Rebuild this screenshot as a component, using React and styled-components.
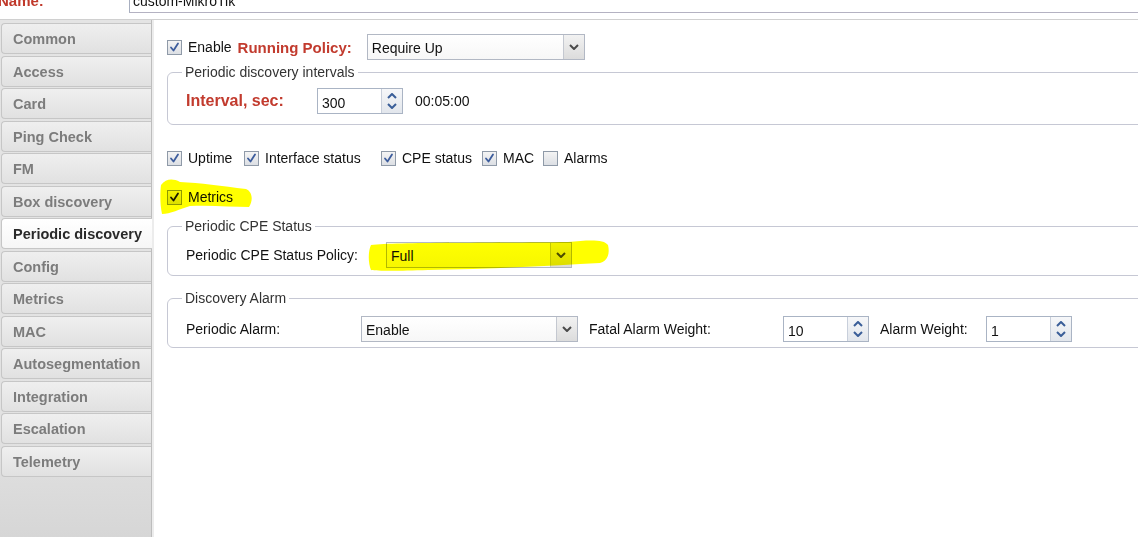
import React from 'react';
import styled, { createGlobalStyle } from 'styled-components';

const GlobalStyle = createGlobalStyle`
  html, body {
    margin: 0;
    padding: 0;
    background: #ffffff;
  }
  body {
    font-family: 'Liberation Sans', Arial, sans-serif;
    font-size: 14px;
    color: #111;
  }
`;

const tabs = [
  'Common',
  'Access',
  'Card',
  'Ping Check',
  'FM',
  'Box discovery',
  'Periodic discovery',
  'Config',
  'Metrics',
  'MAC',
  'Autosegmentation',
  'Integration',
  'Escalation',
  'Telemetry',
];

const CheckMark = ({ dark }) => (
  <svg width="11" height="11" viewBox="0 0 11 11">
    <path
      d="M2 5.5 L4.5 8.5 L9 1.5"
      fill="none"
      stroke={dark ? '#1a1a1a' : '#3c5c9c'}
      strokeWidth="1.8"
      strokeLinecap="round"
      strokeLinejoin="round"
    />
  </svg>
);

const Chevron = ({ up, color = '#3a5e98' }) => (
  <svg width="10" height="6" viewBox="0 0 10 6">
    <path
      d={up ? 'M1 5 L5 1 L9 5' : 'M1 1 L5 5 L9 1'}
      fill="none"
      stroke={color}
      strokeWidth="2"
      strokeLinejoin="round"
    />
  </svg>
);

const CheckField = ({ checked, dark, width, children }) => (
  <CheckLabel $width={width}>
    <Box>{checked && <CheckMark dark={dark} />}</Box>
    {children}
  </CheckLabel>
);

const Select = ({ value, width }) => (
  <SelectBox $width={width}>
    <SelectText>{value}</SelectText>
    <SelectArrow>
      <Chevron color="#4a4a4a" />
    </SelectArrow>
  </SelectBox>
);

const Spinner = ({ value }) => (
  <SpinBox>
    <SpinText>{value}</SpinText>
    <SpinArrows>
      <Chevron up />
      <Chevron />
    </SpinArrows>
  </SpinBox>
);

const App = () => {
  return (
    <Page>
      <GlobalStyle />
      <Header>
        <NameLabel>Name:</NameLabel>
        <NameInput>custom-MikroTik</NameInput>
      </Header>
      <Body>
        <Sidebar>
          {tabs.map((t) => (
            <Tab key={t} $active={t === 'Periodic discovery'}>
              {t}
            </Tab>
          ))}
        </Sidebar>
        <Content>
          <Row>
            <CheckField checked>Enable</CheckField>
            <RedLabel>Running Policy:</RedLabel>
            <Select value="Require Up" width={218} />
          </Row>

          <Group $mt={4}>
            <Legend>Periodic discovery intervals</Legend>
            <GroupRow>
              <RedLabel $width={131} $size={16}>Interval, sec:</RedLabel>
              <Spinner value="300" />
              <PlainText $ml={12}>00:05:00</PlainText>
            </GroupRow>
          </Group>

          <CheckRow>
            <CheckField checked width={77}>Uptime</CheckField>
            <CheckField checked width={137}>Interface status</CheckField>
            <CheckField checked width={101}>CPE status</CheckField>
            <CheckField checked width={61}>MAC</CheckField>
            <CheckField>Alarms</CheckField>
          </CheckRow>

          <MetricsRow>
            <Marker>
              <CheckField checked dark>Metrics</CheckField>
              <MarkerInk width="94" height="38" viewBox="0 0 94 38" style={{ left: -7, top: -11 }}>
                <path d="M1 8 C 6 2, 12 1, 20 5 C 40 6, 62 9, 86 12 C 93 15, 93 24, 89 30 C 72 30, 52 28, 30 29 C 20 32, 10 37, 2 37 C 0 28, 0 16, 1 8 Z" />
              </MarkerInk>
            </Marker>
          </MetricsRow>

          <Group $mt={12}>
            <Legend>Periodic CPE Status</Legend>
            <GroupRow $pb={7}>
              <PlainText $width={200}>Periodic CPE Status Policy:</PlainText>
              <Marker>
                <Select value="Full" width={186} />
                <MarkerInk width="242" height="34" viewBox="0 0 242 34" style={{ left: -18, top: -3 }}>
                  <path d="M3 6 C 30 3, 120 4, 200 3 C 220 1, 236 0, 240 6 C 242 14, 240 22, 232 24 C 180 27, 120 30, 60 31 C 30 32, 10 32, 3 31 C 0 24, 0 12, 3 6 Z" />
                </MarkerInk>
              </Marker>
            </GroupRow>
          </Group>

          <Group $mt={14}>
            <Legend>Discovery Alarm</Legend>
            <GroupRow $pt={9} $pb={5}>
              <PlainText $width={175}>Periodic Alarm:</PlainText>
              <Select value="Enable" width={217} />
              <PlainText $width={194} $ml={11}>Fatal Alarm Weight:</PlainText>
              <Spinner value="10" />
              <PlainText $width={106} $ml={11}>Alarm Weight:</PlainText>
              <Spinner value="1" />
            </GroupRow>
          </Group>
        </Content>
      </Body>
    </Page>
  );
};

export default App;

const Page = styled.div`
  width: 1138px;
  height: 537px;
  overflow: hidden;
  display: flex;
  flex-direction: column;
`;

const Header = styled.div`
  display: flex;
  align-items: flex-end;
  height: 20px;
  border-bottom: 1px solid #d0d0d0;
  box-sizing: border-box;
  overflow: hidden;
`;

const NameLabel = styled.div`
  width: 131px;
  font-weight: bold;
  font-size: 15px;
  color: #c0392b;
  margin-bottom: 10px;
  margin-left: -2px;
  line-height: 17px;
`;

const NameInput = styled.div`
  flex: 1;
  height: 30px;
  margin-bottom: 6px;
  border-left: 1px solid #a8afc0;
  border-bottom: 1px solid #b4b2c2;
  box-sizing: border-box;
  padding-left: 3px;
  display: flex;
  align-items: flex-end;
  line-height: 16px;
  padding-bottom: 3px;
  font-size: 14px;
  color: #111;
`;

const Body = styled.div`
  flex: 1;
  display: flex;
  min-height: 0;
`;

const Sidebar = styled.div`
  width: 152px;
  flex: none;
  box-sizing: border-box;
  padding-top: 3px;
  background: linear-gradient(to bottom, #e4e4e4 0%, #e2e2e2 80%, #d6d6d6 100%);
  border-right: 1px solid #bdbdbd;
  box-shadow: 2px 0 0 #ececec;
  display: flex;
  flex-direction: column;
  gap: 1.5px;
`;

const Tab = styled.div`
  height: 31px;
  margin-left: 1px;
  box-sizing: border-box;
  border: 1px solid #c6c6c6;
  border-right: none;
  border-radius: 4px 0 0 4px;
  background: ${(p) =>
    p.$active
      ? 'linear-gradient(to bottom, #ffffff, #f6f6f6)'
      : 'linear-gradient(to bottom, #efefef, #e1e1e1)'};
  color: ${(p) => (p.$active ? '#2a2a2a' : '#7c7c7c')};
  font-weight: bold;
  font-size: 14.5px;
  display: flex;
  align-items: center;
  padding-left: 11px;
  padding-top: 1px;
  margin-right: ${(p) => (p.$active ? '-1px' : '0')};
  position: relative;
  z-index: ${(p) => (p.$active ? 1 : 0)};
`;

const Content = styled.div`
  flex: 1;
  padding: 14px 0 0 13px;
  margin-left: 2px;
  background: #ffffff;
  overflow: hidden;
  display: flex;
  flex-direction: column;
  align-items: stretch;
`;

const Row = styled.div`
  display: flex;
  align-items: center;
  height: 26px;
`;

const CheckLabel = styled.label`
  display: inline-flex;
  align-items: center;
  gap: 6px;
  font-size: 14px;
  color: #111;
  line-height: 18px;
  white-space: nowrap;
  width: ${(p) => (p.$width ? `${p.$width}px` : 'auto')};
  flex: none;
`;

const Box = styled.span`
  width: 15px;
  height: 15px;
  box-sizing: border-box;
  border: 1px solid #8f9aa8;
  background: linear-gradient(to bottom, #f4f4f4, #dcdfe4);
  display: inline-flex;
  align-items: center;
  justify-content: center;
`;

const RedLabel = styled.span`
  font-weight: bold;
  font-size: ${(p) => p.$size || 15}px;
  color: #c23b2e;
  margin-left: ${(p) => (p.$width ? '0' : '6px')};
  margin-right: ${(p) => (p.$width ? '0' : '15px')};
  width: ${(p) => (p.$width ? `${p.$width}px` : 'auto')};
  white-space: nowrap;
`;

const PlainText = styled.span`
  font-size: 14px;
  color: #111;
  width: ${(p) => (p.$width ? `${p.$width}px` : 'auto')};
  margin-left: ${(p) => p.$ml || 0}px;
  flex: none;
  white-space: nowrap;
`;

const SelectBox = styled.div`
  width: ${(p) => p.$width}px;
  height: 26px;
  box-sizing: border-box;
  border: 1px solid #b2b8c4;
  background: linear-gradient(to bottom, #ffffff, #f7f7f7);
  display: flex;
  align-items: stretch;
  flex: none;
`;

const SelectText = styled.span`
  flex: 1;
  padding-left: 4px;
  display: flex;
  align-items: center;
  padding-top: 2px;
  font-size: 14px;
  color: #111;
`;

const SelectArrow = styled.span`
  width: 20px;
  border-left: 1px solid #c4c8d0;
  background: linear-gradient(to bottom, #f2f2f2, #dcdcdc);
  display: flex;
  align-items: center;
  justify-content: center;
`;

const SpinBox = styled.div`
  width: 86px;
  height: 26px;
  box-sizing: border-box;
  border: 1px solid #aab4c4;
  display: flex;
  align-items: stretch;
  flex: none;
`;

const SpinText = styled.span`
  flex: 1;
  padding-left: 4px;
  padding-top: 3px;
  display: flex;
  align-items: center;
  font-size: 14px;
  color: #111;
`;

const SpinArrows = styled.span`
  width: 20px;
  border-left: 1px solid #c8cfdb;
  background: linear-gradient(to bottom, #f6f7f9, #e2e6ec);
  display: flex;
  flex-direction: column;
  align-items: center;
  justify-content: space-evenly;
`;

const Group = styled.fieldset`
  margin: ${(p) => p.$mt || 0}px -20px 0 0;
  padding: 7px 18px 10px 18px;
  border: 1px solid #c6c8d4;
  border-radius: 6px;
  min-width: 0;
`;

const Legend = styled.legend`
  margin-left: -4px;
  padding: 0 3px;
  font-size: 14px;
  color: #333;
  line-height: 17px;
`;

const GroupRow = styled.div`
  display: flex;
  align-items: center;
  height: 26px;
  margin-top: ${(p) => (p.$pt !== undefined ? `${p.$pt - 7}px` : '0')};
  margin-bottom: ${(p) => (p.$pb !== undefined ? `${p.$pb - 10}px` : '0')};
`;

const CheckRow = styled.div`
  display: flex;
  align-items: center;
  margin-top: 24px;
  height: 18px;
`;

const MetricsRow = styled.div`
  display: flex;
  align-items: center;
  margin-top: 21px;
  height: 18px;
`;

const Marker = styled.div`
  position: relative;
  display: inline-flex;
`;

const MarkerInk = styled.svg`
  position: absolute;
  pointer-events: none;
  mix-blend-mode: multiply;
  fill: #ffff00;
`;
